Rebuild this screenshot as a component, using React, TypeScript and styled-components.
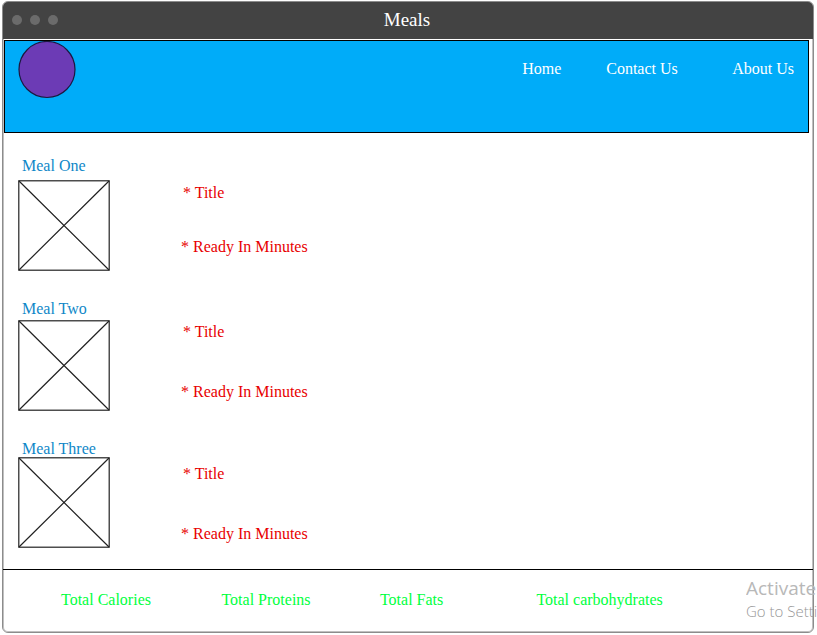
import React from "react";
import styled, { createGlobalStyle } from "styled-components";

const GlobalStyle = createGlobalStyle`
  * { box-sizing: border-box; }
  body {
    margin: 0;
    background: #ffffff;
    font-family: "Liberation Serif", "Times New Roman", serif;
    font-size: 16px;
    line-height: 16px;
  }
`;

const Page = styled.div`
  position: relative;
  display: flex;
  min-height: 100vh;
  padding: 1px 3px 2px 2px;
  overflow: hidden;
`;

const Window = styled.div`
  flex: 1;
  display: flex;
  flex-direction: column;
  border: 1px solid #8c8c8c;
  border-radius: 6px;
  box-shadow: inset 0 0 0 1px #c0c0c0;
  overflow: hidden;
`;

const TitleBar = styled.div`
  display: grid;
  grid-template-columns: 1fr auto 1fr;
  align-items: center;
  height: 37px;
  padding: 0 11px 2px 9px;
  background: #434343;
`;

const Dots = styled.div`
  display: flex;
  gap: 8px;
`;

const Dot = styled.span`
  width: 10px;
  height: 10px;
  border-radius: 50%;
  background: #6b6b6b;
`;

const WindowTitle = styled.h1`
  margin: 0;
  font-size: 19px;
  font-weight: 400;
  line-height: 20px;
  color: #ffffff;
`;

const Header = styled.header`
  display: flex;
  justify-content: space-between;
  align-items: flex-start;
  height: 93px;
  margin: 1px 4px 0 1px;
  padding: 0 13px;
  border: 1px solid #000000;
  background: #00acf9;
`;

const Logo = styled.svg`
  display: block;
  width: 58px;
  height: 58px;
`;

const Nav = styled.nav`
  display: grid;
  grid-template-columns: 84px 126px auto;
  padding: 20px 1px 0 0;
`;

const NavLink = styled.a`
  color: #ffffff;
  text-decoration: none;
`;

const Main = styled.main`
  flex: 1;
  display: flex;
  flex-direction: column;
  gap: 30px;
  padding: 25px 15px 20px;
`;

const MealRow = styled.section`
  display: grid;
  grid-template-columns: 163px 1fr;
`;

const MealMedia = styled.div<{ $gap: number }>`
  display: flex;
  flex-direction: column;
  gap: ${(p) => p.$gap}px;
`;

const MealName = styled.h2`
  margin: 0;
  padding-left: 4px;
  font-size: 16px;
  font-weight: 400;
  line-height: 16px;
  color: #0f87c8;
`;

const Picture = styled.svg`
  display: block;
  width: 92px;
  height: 91px;
`;

const MealFacts = styled.div<{ $top: number; $gap: number }>`
  display: flex;
  flex-direction: column;
  gap: ${(p) => p.$gap}px;
  padding-top: ${(p) => p.$top}px;
`;

const Fact = styled.p<{ $indent?: boolean }>`
  margin: 0;
  padding-left: ${(p) => (p.$indent ? 2 : 0)}px;
  color: #e80000;
`;

const Totals = styled.footer`
  display: grid;
  grid-template-columns: 160fr 158fr 156fr 210fr;
  height: 63px;
  padding: 22px 66px 0 58px;
  border-top: 1px solid #000000;
  color: #00ff40;
`;

const Watermark = styled.aside`
  position: absolute;
  right: 0;
  bottom: 14px;
  width: 71px;
  overflow: hidden;
  white-space: nowrap;
  font-family: "Open Sans", "Noto Sans", sans-serif;
`;

const WatermarkTitle = styled.div`
  font-size: 19px;
  line-height: 26px;
  color: #b8b8b8;
`;

const WatermarkNote = styled.div`
  font-size: 15px;
  font-weight: 300;
  line-height: 20px;
  color: #969696;
`;

const meals = [
  { name: "Meal One", mediaGap: 6, factsTop: 27, factsGap: 38 },
  { name: "Meal Two", mediaGap: 3, factsTop: 23, factsGap: 44 },
  { name: "Meal Three", mediaGap: 0, factsTop: 25, factsGap: 44 },
];

const totals = ["Total Calories", "Total Proteins", "Total Fats", "Total carbohydrates"];

function PicturePlaceholder() {
  return (
    <Picture viewBox="0 0 92 91" fill="none" stroke="#222222" strokeWidth="1.2" aria-hidden="true">
      <rect x="0.8" y="0.8" width="90.4" height="89.4" />
      <path d="M1 1 91 90M91 1 1 90" />
    </Picture>
  );
}

export default function App() {
  return (
    <>
      <GlobalStyle />
      <Page>
        <Window>
          <TitleBar>
            <Dots>
              <Dot />
              <Dot />
              <Dot />
            </Dots>
            <WindowTitle>Meals</WindowTitle>
          </TitleBar>
          <Header>
            <Logo viewBox="0 0 58 58" aria-hidden="true">
              <circle cx="29" cy="28.5" r="28" fill="#6c3bb5" stroke="#1c1840" strokeWidth="1.2" />
            </Logo>
            <Nav>
              <NavLink href="#home">Home</NavLink>
              <NavLink href="#contact">Contact Us</NavLink>
              <NavLink href="#about">About Us</NavLink>
            </Nav>
          </Header>
          <Main>
            {meals.map((meal) => (
              <MealRow key={meal.name}>
                <MealMedia $gap={meal.mediaGap}>
                  <MealName>{meal.name}</MealName>
                  <PicturePlaceholder />
                </MealMedia>
                <MealFacts $top={meal.factsTop} $gap={meal.factsGap}>
                  <Fact $indent>* Title</Fact>
                  <Fact>* Ready In Minutes</Fact>
                </MealFacts>
              </MealRow>
            ))}
          </Main>
          <Totals>
            {totals.map((label) => (
              <span key={label}>{label}</span>
            ))}
          </Totals>
        </Window>
        <Watermark>
          <WatermarkTitle>Activate</WatermarkTitle>
          <WatermarkNote>Go to Setti</WatermarkNote>
        </Watermark>
      </Page>
    </>
  );
}
